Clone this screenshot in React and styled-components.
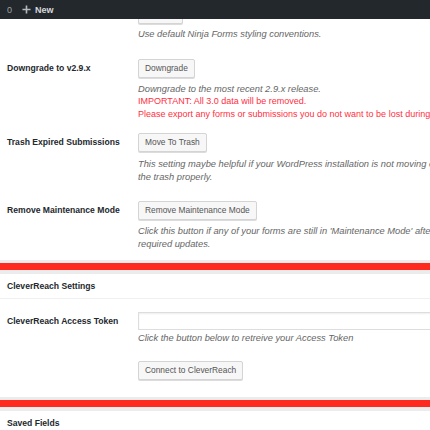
import React from "react";
import styled, { createGlobalStyle } from "styled-components";

const GlobalStyle = createGlobalStyle`
  html, body {
    margin: 0;
    padding: 0;
    background: #fff;
    overflow: hidden;
  }
  body {
    font-family: "Liberation Sans", Arial, sans-serif;
    color: #23282d;
  }
`;

const AdminBar = styled.div`
  position: fixed;
  top: 0;
  left: 0;
  right: 0;
  height: 19px;
  background: #23282d;
  display: flex;
  align-items: center;
  padding-left: 7px;
  gap: 10px;
  z-index: 10;
  font-size: 9px;
  color: #b4b9be;
`;

const BarItem = styled.div`
  display: flex;
  align-items: center;
  gap: 4px;
  font-weight: ${props => (props.bold ? "bold" : "normal")};
  color: ${props => (props.bold ? "#d5d8db" : "#9ea3a8")};
`;

const Page = styled.div`
  width: 430px;
  overflow: hidden;
`;

const Row = styled.div`
  display: grid;
  grid-template-columns: 138px 1fr;
  padding: ${props => props.pad || "8px 0"};
  white-space: nowrap;
`;

const Label = styled.div`
  padding-left: 7px;
  font-size: 8.6px;
  font-weight: bold;
  color: #23282d;
  line-height: ${props => props.lh || "19px"};
`;

const Field = styled.div`
  display: flex;
  flex-direction: column;
  align-items: flex-start;
  min-width: 0;
`;

const Button = styled.button`
  height: 19px;
  padding: 0 6px;
  font-family: "Liberation Sans", Arial, sans-serif;
  font-size: 8.4px;
  color: #555;
  background: #f7f7f7;
  border: 1px solid #d4d4d4;
  border-radius: 2px;
  box-shadow: 0 1px 0 #dcdcdc;
  line-height: 17px;
`;

const Desc = styled.div`
  margin-top: ${props => (props.alert ? "0" : props.gap || "5px")};
  font-size: ${props => (props.alert ? "9px" : "9.3px")};
  line-height: 12.5px;
  font-style: ${props => (props.alert ? "normal" : "italic")};
  color: ${props => (props.alert ? "#ff2f3f" : "#666")};
`;

const Input = styled.div`
  width: 320px;
  height: 18px;
  box-sizing: border-box;
  border: 1px solid #ddd;
  box-shadow: inset 0 1px 2px rgba(0, 0, 0, 0.07);
  background: #fff;
`;

const Divider = styled.div`
  height: 7px;
  background: #ff2a1e;
  border-top: 3px solid #ececec;
  border-bottom: 4px solid #ececec;
`;

const SectionTitle = styled.div`
  padding: 7px 7px 6px;
  font-size: 8.6px;
  font-weight: bold;
  line-height: 11px;
  color: #23282d;
  border-bottom: ${props => (props.open ? "1px solid #f0f0f0" : "none")};
`;

const PlusIcon = () => (
  <svg width="9" height="9" viewBox="0 0 10 10">
    <path d="M5 0.5v9M0.5 5h9" stroke="#b4b9be" strokeWidth="1.8" />
  </svg>
);

export default function App() {
  return (
    <>
      <GlobalStyle />
      <AdminBar>
        <BarItem>0</BarItem>
        <BarItem bold>
          <PlusIcon />
          New
        </BarItem>
      </AdminBar>
      <Page>
        <Row pad="5px 0 8px">
          <Label>Use Ninja Forms Styles</Label>
          <Field>
            <Button>Enabled</Button>
            <Desc gap="4px">Use default Ninja Forms styling conventions.</Desc>
          </Field>
        </Row>
        <Row pad="10px 0 5px">
          <Label>Downgrade to v2.9.x</Label>
          <Field>
            <Button>Downgrade</Button>
            <Desc>Downgrade to the most recent 2.9.x release.</Desc>
            <Desc alert>
              IMPORTANT: All 3.0 data will be removed.
              <br />
              Please export any forms or submissions you do not want to be lost during this process.
            </Desc>
          </Field>
        </Row>
        <Row pad="8px 0 9px">
          <Label>Trash Expired Submissions</Label>
          <Field>
            <Button>Move To Trash</Button>
            <Desc gap="6px">
              This setting maybe helpful if your WordPress installation is not moving expired submissions to
              <br />
              the trash properly.
            </Desc>
          </Field>
        </Row>
        <Row pad="9px 0 10px">
          <Label>Remove Maintenance Mode</Label>
          <Field>
            <Button>Remove Maintenance Mode</Button>
            <Desc>
              Click this button if any of your forms are still in 'Maintenance Mode' after performing all
              <br />
              required updates.
            </Desc>
          </Field>
        </Row>
        <Divider />
        <SectionTitle open>CleverReach Settings</SectionTitle>
        <Row pad="13px 0 0">
          <Label lh="18px">CleverReach Access Token</Label>
          <Field>
            <Input />
            <Desc gap="2px">Click the button below to retreive your Access Token</Desc>
          </Field>
        </Row>
        <Row pad="16px 0 17px">
          <Label />
          <Field>
            <Button>Connect to CleverReach</Button>
          </Field>
        </Row>
        <Divider />
        <SectionTitle>Saved Fields</SectionTitle>
      </Page>
    </>
  );
}
